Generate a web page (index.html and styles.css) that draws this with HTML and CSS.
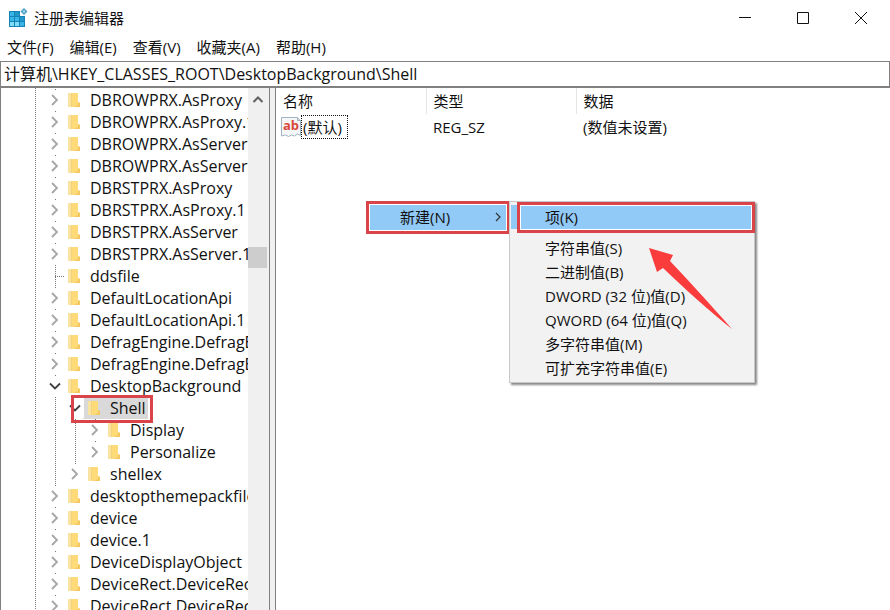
FILE: index.html
```html
<!DOCTYPE html>
<html lang="zh-CN">
<head>
    <meta charset="UTF-8">
    <meta name="viewport" content="width=device-width, initial-scale=1.0">
    <title>注册表编辑器</title>
    <link rel="stylesheet" href="styles.css">
</head>
<body>
    <svg class="sprite" aria-hidden="true">
        <symbol id="folder" viewBox="0 0 14 16">
            <path d="M1 1h8v14H1z" fill="#f3d37c"/>
            <path d="M1 1h3v14H1z" fill="#fae3a0"/>
            <path d="M5 1h6v9l2 1v4H5z" fill="#ffda78"/>
            <path d="M11 10l2 1v4H7l4-2z" fill="#f3c860"/>
        </symbol>
        <symbol id="closed" viewBox="0 0 12 12">
            <path d="M3 1l5 5-5 5" fill="none" stroke="#a6a6a6" stroke-width="1.800"/>
        </symbol>
        <symbol id="opened" viewBox="0 0 12 12">
            <path d="M1 3.500L6 8.500l5-5" fill="none" stroke="#404040" stroke-width="1.800"/>
        </symbol>
    </svg>

    <header class="titlebar">
        <svg class="app-icon" viewBox="0 0 20 20" aria-hidden="true">
            <path d="M1 3h11v5h5v11H1z" fill="#1583b5"/>
            <path d="M2 4h4v4H2zM7 9h4v4H7zM2 9h4v4H2zM12 14h4v4h-4z" fill="#38b5e6"/>
            <path d="M2 14h4v4H2zM7 14h4v4H7z" fill="#7fdcf8"/>
            <path d="M7 4h4v4H7zM12 9h4v4h-4z" fill="#2098cc"/>
            <path d="M16 0l3.500 3.500L16 7l-3.500-3.500z" fill="#4a9fc9"/>
            <path d="M16 2l1.500 1.500L16 5l-1.500-1.500z" fill="#a9dcf0"/>
        </svg>
        <h1 class="title">注册表编辑器</h1>
        <div class="window-buttons">
            <button type="button" class="window-btn" aria-label="最小化">
                <svg viewBox="0 0 12 12"><path d="M0 5.500h12"/></svg>
            </button>
            <button type="button" class="window-btn" aria-label="最大化">
                <svg viewBox="0 0 12 12"><path d="M.5.5h11v11H.5z"/></svg>
            </button>
            <button type="button" class="window-btn" aria-label="关闭">
                <svg viewBox="0 0 12 12"><path d="M0 0l12 12M12 0L0 12"/></svg>
            </button>
        </div>
    </header>

    <nav class="menubar">
        <button type="button">文件(F)</button>
        <button type="button">编辑(E)</button>
        <button type="button">查看(V)</button>
        <button type="button">收藏夹(A)</button>
        <button type="button">帮助(H)</button>
    </nav>

    <input type="text" class="address" aria-label="地址" value="计算机\HKEY_CLASSES_ROOT\DesktopBackground\Shell">

    <main class="panes">
        <section class="tree-pane">
            <div class="tree-scroll">
                <ul class="tree root">
                    <li><div class="node"><button type="button" class="toggle" aria-label="展开"><svg><use href="#closed"/></svg></button><svg class="folder"><use href="#folder"/></svg><span class="name">DBROWPRX.AsProxy</span></div></li>
                    <li><div class="node"><button type="button" class="toggle" aria-label="展开"><svg><use href="#closed"/></svg></button><svg class="folder"><use href="#folder"/></svg><span class="name">DBROWPRX.AsProxy.1</span></div></li>
                    <li><div class="node"><button type="button" class="toggle" aria-label="展开"><svg><use href="#closed"/></svg></button><svg class="folder"><use href="#folder"/></svg><span class="name">DBROWPRX.AsServer</span></div></li>
                    <li><div class="node"><button type="button" class="toggle" aria-label="展开"><svg><use href="#closed"/></svg></button><svg class="folder"><use href="#folder"/></svg><span class="name">DBROWPRX.AsServer.1</span></div></li>
                    <li><div class="node"><button type="button" class="toggle" aria-label="展开"><svg><use href="#closed"/></svg></button><svg class="folder"><use href="#folder"/></svg><span class="name">DBRSTPRX.AsProxy</span></div></li>
                    <li><div class="node"><button type="button" class="toggle" aria-label="展开"><svg><use href="#closed"/></svg></button><svg class="folder"><use href="#folder"/></svg><span class="name">DBRSTPRX.AsProxy.1</span></div></li>
                    <li><div class="node"><button type="button" class="toggle" aria-label="展开"><svg><use href="#closed"/></svg></button><svg class="folder"><use href="#folder"/></svg><span class="name">DBRSTPRX.AsServer</span></div></li>
                    <li><div class="node"><button type="button" class="toggle" aria-label="展开"><svg><use href="#closed"/></svg></button><svg class="folder"><use href="#folder"/></svg><span class="name">DBRSTPRX.AsServer.1</span></div></li>
                    <li><div class="node"><span class="leaf"></span><svg class="folder"><use href="#folder"/></svg><span class="name">ddsfile</span></div></li>
                    <li><div class="node"><button type="button" class="toggle" aria-label="展开"><svg><use href="#closed"/></svg></button><svg class="folder"><use href="#folder"/></svg><span class="name">DefaultLocationApi</span></div></li>
                    <li><div class="node"><button type="button" class="toggle" aria-label="展开"><svg><use href="#closed"/></svg></button><svg class="folder"><use href="#folder"/></svg><span class="name">DefaultLocationApi.1</span></div></li>
                    <li><div class="node"><button type="button" class="toggle" aria-label="展开"><svg><use href="#closed"/></svg></button><svg class="folder"><use href="#folder"/></svg><span class="name">DefragEngine.DefragE</span></div></li>
                    <li><div class="node"><button type="button" class="toggle" aria-label="展开"><svg><use href="#closed"/></svg></button><svg class="folder"><use href="#folder"/></svg><span class="name">DefragEngine.DefragE</span></div></li>
                    <li>
                        <div class="node"><button type="button" class="toggle" aria-label="折叠"><svg><use href="#opened"/></svg></button><svg class="folder"><use href="#folder"/></svg><span class="name">DesktopBackground</span></div>
                        <ul class="tree">
                            <li>
                                <div class="node selected"><button type="button" class="toggle" aria-label="折叠"><svg><use href="#opened"/></svg></button><svg class="folder"><use href="#folder"/></svg><span class="name">Shell</span></div>
                                <ul class="tree">
                                    <li><div class="node"><button type="button" class="toggle" aria-label="展开"><svg><use href="#closed"/></svg></button><svg class="folder"><use href="#folder"/></svg><span class="name">Display</span></div></li>
                                    <li class="last"><div class="node"><button type="button" class="toggle" aria-label="展开"><svg><use href="#closed"/></svg></button><svg class="folder"><use href="#folder"/></svg><span class="name">Personalize</span></div></li>
                                </ul>
                            </li>
                            <li class="last"><div class="node"><button type="button" class="toggle" aria-label="展开"><svg><use href="#closed"/></svg></button><svg class="folder"><use href="#folder"/></svg><span class="name">shellex</span></div></li>
                        </ul>
                    </li>
                    <li><div class="node"><button type="button" class="toggle" aria-label="展开"><svg><use href="#closed"/></svg></button><svg class="folder"><use href="#folder"/></svg><span class="name">desktopthemepackfile</span></div></li>
                    <li><div class="node"><button type="button" class="toggle" aria-label="展开"><svg><use href="#closed"/></svg></button><svg class="folder"><use href="#folder"/></svg><span class="name">device</span></div></li>
                    <li><div class="node"><button type="button" class="toggle" aria-label="展开"><svg><use href="#closed"/></svg></button><svg class="folder"><use href="#folder"/></svg><span class="name">device.1</span></div></li>
                    <li><div class="node"><button type="button" class="toggle" aria-label="展开"><svg><use href="#closed"/></svg></button><svg class="folder"><use href="#folder"/></svg><span class="name">DeviceDisplayObject</span></div></li>
                    <li><div class="node"><button type="button" class="toggle" aria-label="展开"><svg><use href="#closed"/></svg></button><svg class="folder"><use href="#folder"/></svg><span class="name">DeviceRect.DeviceRec</span></div></li>
                    <li><div class="node"><button type="button" class="toggle" aria-label="展开"><svg><use href="#closed"/></svg></button><svg class="folder"><use href="#folder"/></svg><span class="name">DeviceRect.DeviceRec</span></div></li>
                </ul>
            </div>
            <div class="scrollbar">
                <button type="button" class="scroll-up" aria-label="向上滚动">
                    <svg viewBox="0 0 12 12"><path d="M1.500 8L6 3.500 10.500 8"/></svg>
                </button>
                <div class="thumb"></div>
            </div>
        </section>

        <section class="list-pane">
            <table class="values">
                <thead>
                    <tr><th class="col">名称</th><th class="col">类型</th><th>数据</th></tr>
                </thead>
                <tbody>
                    <tr>
                        <td>
                            <div class="value-name">
                                <svg class="ab-icon" viewBox="0 0 20 20" aria-hidden="true">
                                    <path d="M.5.500h16l3 3v15l-3-1.500-3 2-3-1-3 1.500-3-1.500-4 1z" fill="#f4f6f8" stroke="#9fb3c0"/>
                                    <path d="M16.500.500v3h3" fill="#cfdbe2" stroke="#9fb3c0"/>
                                    <text x="2" y="13">ab</text>
                                </svg>
                                <span class="focused">(默认)</span>
                            </div>
                        </td>
                        <td>REG_SZ</td>
                        <td>(数值未设置)</td>
                    </tr>
                </tbody>
            </table>

            <div class="context-menu">
                <button type="button" class="new-item">新建(N)
                    <svg viewBox="0 0 12 12"><path d="M4 2l4 4-4 4"/></svg>
                </button>
                <div class="submenu">
                    <div class="active-row"><button type="button" class="active">项(K)</button></div>
                    <button type="button">字符串值(S)</button>
                    <button type="button">二进制值(B)</button>
                    <button type="button">DWORD (32 位)值(D)</button>
                    <button type="button">QWORD (64 位)值(Q)</button>
                    <button type="button">多字符串值(M)</button>
                    <button type="button">可扩充字符串值(E)</button>
                    <svg class="arrow" viewBox="0 0 84 82" aria-hidden="true">
                        <path d="M0 0L24 7l-3 6C38 31 60 55 83 81 58 61 34 39 14 20L8 24z" fill="#fb3c3c"/>
                    </svg>
                </div>
            </div>
        </section>
    </main>
</body>
</html>
```
FILE: styles.css
```css
* {
    box-sizing: border-box;
}

body {
    margin: 0;
    height: 100vh;
    display: flex;
    flex-direction: column;
    overflow: hidden;
    background: #fff;
    color: #111;
    font-family: "Open Sans", "Noto Sans CJK SC", sans-serif;
    font-size: 15px;
    line-height: 22px;
}

button,
input {
    font: inherit;
    color: inherit;
    margin: 0;
    padding: 0;
    border: 0;
    background: none;
}

.sprite {
    display: none;
}

/* Title bar */
.titlebar {
    display: flex;
    align-items: center;
    height: 35px;
    flex: none;
    padding-left: 8px;
}

.app-icon {
    width: 20px;
    height: 20px;
}

.title {
    margin: 0 auto 0 6px;
    font-size: 15px;
    font-weight: normal;
}

.window-buttons {
    display: flex;
}

.window-btn {
    width: 58px;
    height: 34px;
    display: flex;
    align-items: center;
    justify-content: center;
}

.window-btn svg {
    width: 12px;
    height: 12px;
    fill: none;
    stroke: #111;
}

.menubar {
    display: flex;
    gap: 16px;
    flex: none;
    height: 26px;
    padding: 0 0 2px 7px;
}

.address {
    flex: none;
    width: 100%;
    height: 27px;
    padding: 0 3px 2px;
    border: 1px solid #808080;
    border-bottom-width: 2px;
    font-size: 16px;
}

/* Panes */
.panes {
    flex: 1;
    min-height: 0;
    display: grid;
    grid-template-columns: 270px 1fr;
    gap: 5px;
    background: #f0f0f0;
}

.tree-pane {
    display: flex;
    min-height: 0;
    background: #fff;
    border-left: 1px solid #808080;
    border-right: 1px solid #808080;
    font-size: 16px;
}

.tree-scroll {
    flex: 1;
    min-width: 0;
    overflow: hidden;
}

.tree {
    list-style: none;
    margin: 0;
    padding: 0 0 0 20px;
}

.root {
    padding: 1px 0 0 44px;
    background: repeating-linear-gradient(#777 0 1px, #fff 1px 2px) 34px 0 / 1px 100% no-repeat;
}

.tree li {
    background: repeating-linear-gradient(#777 0 1px, #fff 1px 2px) 10px 0 / 1px 100% no-repeat;
}

.tree .last {
    background-size: 1px 11px;
}

.node {
    position: relative;
    display: flex;
    align-items: center;
    width: max-content;
    height: 22px;
    white-space: nowrap;
}

.toggle {
    width: 18px;
    height: 20px;
    display: flex;
    align-items: center;
    justify-content: center;
    background: #fff;
    margin-left: 1px;
}

.toggle svg {
    width: 12px;
    height: 12px;
}

.leaf {
    width: 9px;
    height: 1px;
    margin-left: 10px;
    background: repeating-linear-gradient(90deg, #777 0 1px, #fff 1px 2px);
}

.folder {
    width: 14px;
    height: 16px;
    margin-left: 3px;
}

.name {
    padding-left: 9px;
}

.selected {
    z-index: 1;
    padding-right: 2px;
    background: linear-gradient(#d9d9d9, #d9d9d9) 18px 0 no-repeat;
}

/* Red marker frame around the selected key */
.selected::after {
    content: "";
    position: absolute;
    inset: -2px -5px -4px 6px;
    border: 3px solid #d9434a;
}

.scrollbar {
    width: 21px;
    padding-right: 2px;
    background: #f0f0f0;
}

.scroll-up {
    display: flex;
    align-items: center;
    justify-content: center;
    width: 100%;
    height: 24px;
}

.scroll-up svg {
    width: 12px;
    height: 12px;
    fill: none;
    stroke: #606060;
    stroke-width: 2;
}

.thumb {
    height: 21px;
    margin-top: 135px;
    background: #cdcdcd;
}

.list-pane {
    position: relative;
    min-width: 0;
    background: #fff;
    border-left: 1px solid #808080;
}

.values {
    width: 100%;
    table-layout: fixed;
    border-collapse: collapse;
}

.values th,
.values td {
    height: 26px;
    padding: 0 0 0 7px;
    font-weight: normal;
    text-align: left;
}

.values .col {
    width: 150px;
    border-right: 1px solid #e5e5e5;
}

.value-name {
    display: flex;
    align-items: center;
    margin-left: -2px;
}

.ab-icon {
    width: 20px;
    height: 20px;
}

.ab-icon text {
    font-size: 13px;
    font-weight: bold;
    fill: #d9483b;
}

.focused {
    padding: 0 5px 0 1px;
    border: 1px dotted #111;
}

/* Context menu */
.context-menu {
    position: absolute;
    top: 113px;
    left: 90px;
    display: flex;
    align-items: flex-start;
}

.context-menu button {
    text-align: left;
    white-space: nowrap;
}

.new-item {
    display: flex;
    align-items: center;
    justify-content: space-between;
    width: 144px;
    height: 33px;
    padding: 0 3px 2px 31px;
    border: 3px solid #d9434a;
    background: #91c9f7;
    box-shadow: inset 0 0 0 1px #fff;
}

.new-item svg {
    width: 12px;
    height: 12px;
    fill: none;
    stroke: #333;
    stroke-width: 1.2;
}

.submenu {
    position: relative;
    display: flex;
    flex-direction: column;
    width: 246px;
    margin-left: -1px;
    padding-bottom: 2px;
    background: #f2f2f2;
    border: 1px solid #c8c8c8;
    box-shadow: 2px 2px 2px #888;
}

.submenu button {
    height: 24px;
    padding-left: 35px;
}

.active-row {
    display: flex;
    margin: 0 -1px 3px 0;
    padding-left: 7px;
    background: linear-gradient(#91c9f7, #91c9f7) 1px 3px / 6px 24px no-repeat;
}

.submenu .active {
    flex: 1;
    height: 31px;
    padding: 0 0 2px 25px;
    border: 3px solid #d9434a;
    background: #91c9f7;
    box-shadow: inset 0 0 0 1px #fff;
}

.arrow {
    position: absolute;
    top: 46px;
    left: 139px;
    width: 84px;
    height: 82px;
    pointer-events: none;
}
```
